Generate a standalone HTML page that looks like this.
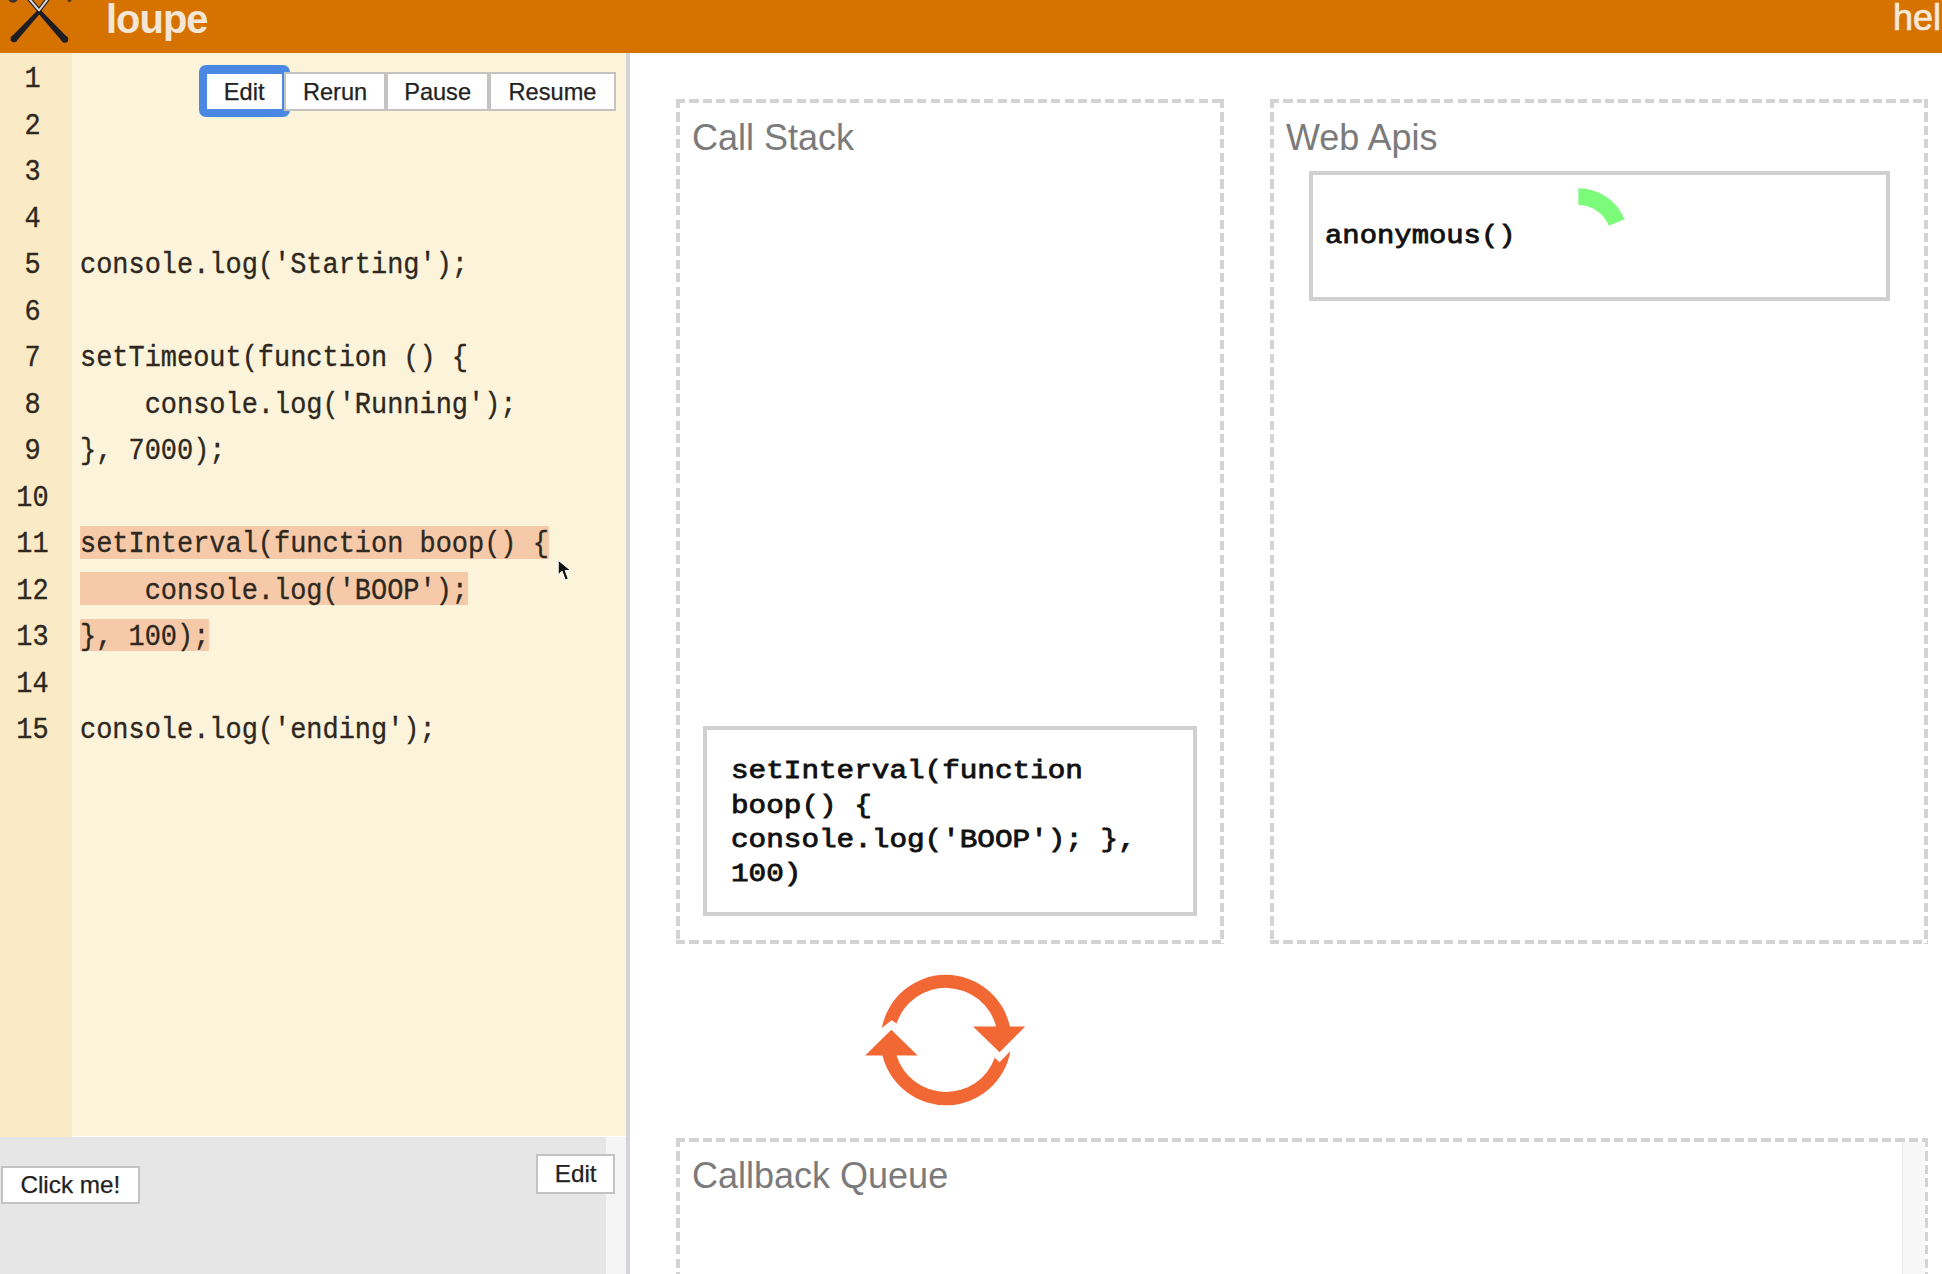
<!DOCTYPE html>
<html><head><meta charset="utf-8">
<style>
html,body{margin:0;padding:0;width:1942px;height:1274px;overflow:hidden;background:#fff;position:relative;font-family:"Liberation Sans",sans-serif;}
.abs{position:absolute;}
#hdr{left:0;top:0;width:1942px;height:53px;background:#d67300;overflow:hidden;}
#logo-text{left:106px;top:-4px;font-size:41px;color:#f4e6d6;font-weight:bold;letter-spacing:-1px;transform:scaleX(0.973);transform-origin:0 0;}
#help{left:1893px;top:-3.5px;font-size:36px;color:#f7e9da;-webkit-text-stroke:0.7px #f7e9da;}
#gutter{left:0;top:53px;width:72px;height:1084px;background:#fbeac6;}
#code{left:72px;top:53px;width:555px;height:1083px;background:#fcf3db;}
#divider{left:626px;top:53px;width:4px;height:1221px;background:#d5d3d8;}
#bottom{left:0;top:1137px;width:606px;height:137px;background:#e6e6e6;}
#bottom2{left:606px;top:1137px;width:21px;height:137px;background:#f5f5f5;}
#lns{left:0;top:56.25px;width:65px;text-align:center;font-family:"Liberation Mono",monospace;font-size:30px;line-height:46.5px;color:#2e2820;white-space:pre;transform:scaleX(0.898);transform-origin:32.5px 0;-webkit-text-stroke:0.35px #2e2820;}
#codetext{left:80px;top:56.25px;font-family:"Liberation Mono",monospace;font-size:30px;line-height:46.5px;color:#2e2820;white-space:pre;transform:scaleX(0.898);transform-origin:0 0;-webkit-text-stroke:0.35px #2e2820;}
.hlr{position:absolute;height:32.8px;background:#f6c9a9;}
.btn{position:absolute;background:#fff;border:2.5px solid #c4c3c2;box-sizing:border-box;}
.bt{position:absolute;height:38.6px;line-height:41.6px;text-align:center;font-size:23.6px;color:#222;white-space:pre;-webkit-text-stroke:0.25px #222;}
.bt2{position:absolute;text-align:center;font-size:24.3px;color:#222;white-space:pre;-webkit-text-stroke:0.25px #222;}
.dash{position:absolute;box-sizing:border-box;background:repeating-linear-gradient(90deg,#d3d3d3 0 9.2px,transparent 9.2px 13.4px) 0 0/100% 4px no-repeat,repeating-linear-gradient(90deg,#d3d3d3 0 9.2px,transparent 9.2px 13.4px) 0 100%/100% 4px no-repeat,repeating-linear-gradient(180deg,#d3d3d3 0 9.2px,transparent 9.2px 13.4px) 0 0/4px 100% no-repeat,repeating-linear-gradient(180deg,#d3d3d3 0 9.2px,transparent 9.2px 13.4px) 100% 0/4px 100% no-repeat;}
.title{position:absolute;font-size:36px;color:#7b7b7b;margin-top:2px;}
.box{position:absolute;border:4px solid #d0d0d0;box-sizing:border-box;background:#fff;}
.mono{font-family:"Liberation Mono",monospace;font-weight:normal;-webkit-text-stroke:0.8px #111;color:#111;white-space:pre;font-size:25px;line-height:34.4px;transform:scaleX(1.173);transform-origin:0 0;}
</style></head><body>
<div id="hdr" class="abs">
  <svg class="abs" style="left:0;top:0" width="90" height="53" viewBox="0 0 90 53">
    <path d="M28.5 -2 L39 10.5 L48.5 -2" fill="none" stroke="#2a2a2a" stroke-width="4.4"/>
    <path d="M28.5 -2 L39 10.5 L48.5 -2" fill="none" stroke="#dcdad8" stroke-width="2"/>
    <g fill="#1e1d24"><path d="M37.53 10.25 L11.47 36.67 L16.33 41.13 L40.47 12.95 Z"/><circle cx="13.90" cy="38.90" r="3.30"/><path d="M37.93 12.95 L62.47 41.63 L67.33 37.17 L40.87 10.25 Z"/><circle cx="64.90" cy="39.40" r="3.30"/></g>
    <circle cx="13" cy="-2.2" r="5" fill="#3a342e"/>
    <circle cx="69.5" cy="0.5" r="1.8" fill="#5a3a10"/>
  </svg>
  <div id="logo-text" class="abs">loupe</div>
  <div id="help" class="abs">help</div>
</div>
<div id="gutter" class="abs"></div>
<div id="code" class="abs"></div>
<div id="bottom" class="abs"></div>
<div id="bottom2" class="abs"></div>
<div id="divider" class="abs"></div>

<!-- line numbers -->
<div id="lns" class="abs">1
2
3
4
5
6
7
8
9
10
11
12
13
14
15</div>
<div class="hlr" style="left:80px;top:525.8px;width:468.5px;"></div>
<div class="hlr" style="left:80px;top:572.3px;width:388px;"></div>
<div class="hlr" style="left:80px;top:618.5px;width:128.5px;"></div>
<div id="codetext" class="abs">



console.log('Starting');

setTimeout(function () {
    console.log('Running');
}, 7000);

setInterval(function boop() {
    console.log('BOOP');
}, 100);

console.log('ending');</div>

<!-- buttons -->
<div class="abs" style="left:198.5px;top:65px;width:91.2px;height:51.6px;border-radius:7px;background:#4b88e4;"></div>
<div class="abs" style="left:206.5px;top:73.6px;width:75.3px;height:35px;background:#fff;"></div>
<div class="bt" style="left:206.5px;top:72.2px;width:75.3px;">Edit</div>
<div class="btn" style="left:284.4px;top:72.2px;width:101.4px;height:38.6px;"></div>
<div class="bt" style="left:284.4px;top:72.2px;width:101.4px;">Rerun</div>
<div class="btn" style="left:385.8px;top:72.2px;width:103.6px;height:38.6px;"></div>
<div class="bt" style="left:385.8px;top:72.2px;width:103.6px;">Pause</div>
<div class="btn" style="left:489.4px;top:72.2px;width:126.2px;height:38.6px;"></div>
<div class="bt" style="left:489.4px;top:72.2px;width:126.2px;">Resume</div>

<div class="btn" style="left:1.2px;top:1166px;width:138.4px;height:37.8px;"></div>
<div class="bt2" style="left:1.2px;top:1166px;width:138.4px;line-height:37.8px;">Click me!</div>
<div class="btn" style="left:536.4px;top:1154px;width:78.6px;height:39.5px;"></div>
<div class="bt2" style="left:536.4px;top:1154px;width:78.6px;line-height:39.5px;">Edit</div>

<!-- call stack -->
<div class="dash" style="left:676px;top:99px;width:548px;height:844.5px;"></div>
<div class="title" style="left:692px;top:115px;">Call Stack</div>
<div class="box" style="left:703px;top:725.5px;width:494px;height:190.5px;"></div>
<div class="abs mono" style="left:731px;top:755.1px;">setInterval(function
boop() {
console.log('BOOP'); },
100)</div>

<!-- web apis -->
<div class="dash" style="left:1269.5px;top:99px;width:658.5px;height:844.5px;"></div>
<div class="title" style="left:1286px;top:115px;">Web Apis</div>
<div class="box" style="left:1309px;top:171px;width:581px;height:129.5px;"></div>
<div class="abs mono" style="left:1325px;top:220.1px;transform:scaleX(1.155);">anonymous()</div>
<svg class="abs" style="left:1560px;top:175px" width="80" height="60" viewBox="1560 175 80 60">
  <path d="M1578.4 196.65 A41.35 41.35 0 0 1 1616.74 222.51" fill="none" stroke="#7cfb7a" stroke-width="16.9"/>
</svg>

<!-- cycle -->
<svg class="abs" style="left:840px;top:950px" width="220" height="180" viewBox="840 950 220 180">
  <g fill="#f26834">
    <path d="M881.8 1028 A65.35 65.35 0 0 1 1009.9 1026.5 L1025.2 1026.5 L999.6 1052.3 L973 1026.5 L996.1 1026.5 A51.9 51.9 0 0 0 896.6 1023.6 L891.6 1020.3 Z"/>
    <path d="M1010.4 1050.9 A65.35 65.35 0 0 1 882.5 1055.5 L865.2 1055.5 L891.3 1029.7 L917.7 1055.5 L896.5 1055.5 A51.9 51.9 0 0 0 994.8 1057.8 L999.6 1062.2 Z"/>
  </g>
</svg>

<!-- callback queue -->
<div class="dash" style="left:676px;top:1137.5px;width:1252px;height:200px;"></div>
<div class="abs" style="left:1902px;top:1142px;width:22px;height:140px;background:#f7f7f7;border-left:1px solid #e8e8e8;"></div>
<div class="title" style="left:692px;top:1153px;">Callback Queue</div>

<!-- cursor -->
<svg class="abs" style="left:550px;top:552px" width="30" height="36" viewBox="550 552 30 36">
  <path d="M558.2 560.2 L558.2 575 L562 571.2 L565.3 580 L568.3 578.8 L565.2 570.6 L570.6 570.4 Z" fill="#111" stroke="#fff" stroke-width="1"/>
</svg>
</body></html>
